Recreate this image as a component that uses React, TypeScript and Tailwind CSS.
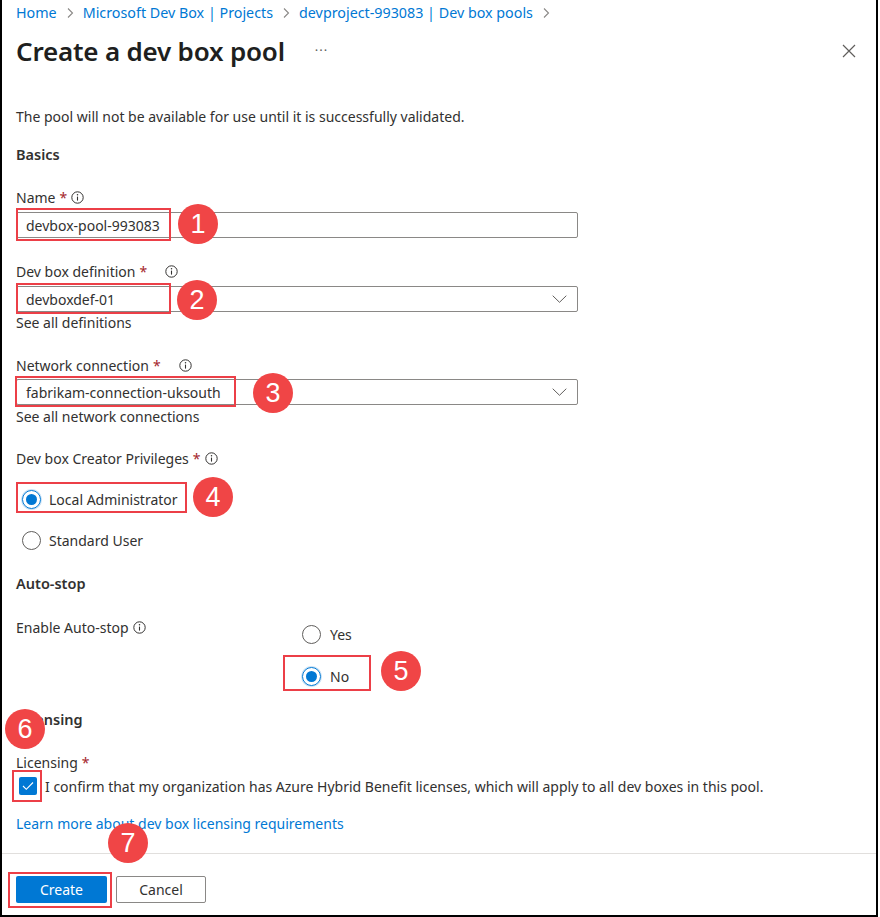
import type { ReactNode } from 'react'

function Info() {
  return (
    <svg width="13" height="13" viewBox="0 0 13 13" className="inline-block">
      <circle cx="6.5" cy="6.5" r="5.7" fill="none" stroke="#323130" strokeWidth="1" />
      <line x1="6.5" y1="5.6" x2="6.5" y2="9.6" stroke="#323130" strokeWidth="1.1" />
      <circle cx="6.5" cy="3.8" r="0.75" fill="#323130" />
    </svg>
  )
}

function Chevron() {
  return (
    <svg width="15" height="8" viewBox="0 0 15 8">
      <path d="M0.7 0.7 L7.5 7.3 L14.3 0.7" fill="none" stroke="#605e5c" strokeWidth="1" />
    </svg>
  )
}

function Crumb() {
  return (
    <svg width="8" height="12" viewBox="0 0 8 12" className="mx-[9px]">
      <path d="M2 1.5 L6.5 6 L2 10.5" fill="none" stroke="#8a8886" strokeWidth="1.1" />
    </svg>
  )
}

function Radio({ on }: { on?: boolean }) {
  return on ? (
    <span className="w-[19px] h-[19px] rounded-full border-[1.5px] border-[#0078d4] flex items-center justify-center shadow-[0_0_0_1px_#c7e0f4]">
      <span className="w-[11px] h-[11px] rounded-full bg-[#0078d4]" />
    </span>
  ) : (
    <span className="w-[19px] h-[19px] rounded-full border-[1.5px] border-[#605e5c]" />
  )
}

function Label({ children, info, gap = 'ml-1' }: { children: ReactNode; info?: boolean; gap?: string }) {
  return (
    <div className="h-[18px] flex items-center text-[14px] text-[#323130]">
      {children}
      {info && (
        <span className={`${gap} flex items-center`}>
          <Info />
        </span>
      )}
    </div>
  )
}

function Req() {
  return <span className="text-[#a4262c] ml-[4px]">*</span>
}

function Badge({ n, x, y }: { n: number; x: number; y: number }) {
  return (
    <div
      className="absolute w-[40px] h-[40px] rounded-full bg-[#f04546] text-white text-[27px] flex items-center justify-center font-['Liberation_Sans',sans-serif]"
      style={{ left: x - 20, top: y - 20 }}
    >
      {n}
    </div>
  )
}

function Box({ x, y, w, h }: { x: number; y: number; w: number; h: number }) {
  return (
    <div
      className="absolute border-2 border-[#ec3f47]"
      style={{ left: x, top: y, width: w, height: h }}
    />
  )
}

export default function App() {
  return (
    <div className="relative w-[880px] h-[917px] bg-white font-['Noto_Sans',sans-serif] text-[#323130] overflow-hidden">
      <div className="w-[878px] h-[917px] border-x-2 border-b-2 border-black flex flex-col">
        <div className="px-[14px]">
          <div className="h-[26px] flex items-center text-[14.3px] text-[#0078d4]">
            <span>Home</span>
            <Crumb />
            <span>Microsoft Dev Box | Projects</span>
            <Crumb />
            <span>devproject-993083 | Dev box pools</span>
            <Crumb />
          </div>
          <div className="h-[50px] flex items-center">
            <h1 className="text-[26px] font-semibold text-[#201f1e] tracking-[-0.2px]">Create a dev box pool</h1>
            <span className="ml-[30px] text-[13px] text-[#605e5c] tracking-[1px]">···</span>
            <svg width="14" height="14" viewBox="0 0 14 14" className="ml-auto mr-[6px]">
              <path d="M1 1 L13 13 M13 1 L1 13" stroke="#605e5c" strokeWidth="1.2" />
            </svg>
          </div>

          <p className="mt-[32px] h-[18px] text-[14px] leading-[18px]">
            The pool will not be available for use until it is successfully validated.
          </p>
          <div className="mt-[19px] h-[18px] text-[14.5px] font-semibold leading-[18px]">Basics</div>

          <div className="mt-[25px]">
            <Label info>
              Name
              <Req />
            </Label>
          </div>
          <div className="mt-[6px] w-[562px] h-[26px] border border-[#8a8886] rounded-[2px] flex items-center px-[9px] text-[14px]">
            devbox-pool-993083
          </div>

          <div className="mt-[24px]">
            <Label info gap="ml-[18px]">
              Dev box definition
              <Req />
            </Label>
          </div>
          <div className="mt-[6px] w-[562px] h-[26px] border border-[#8a8886] rounded-[2px] flex items-center pl-[9px] pr-[10px] text-[14px]">
            <span>devboxdef-01</span>
            <span className="ml-auto flex">
              <Chevron />
            </span>
          </div>
          <div className="mt-[2px] h-[18px] text-[14px] leading-[18px]">See all definitions</div>

          <div className="mt-[24px]">
            <Label info gap="ml-[18px]">
              Network connection
              <Req />
            </Label>
          </div>
          <div className="mt-[5px] w-[562px] h-[26px] border border-[#8a8886] rounded-[2px] flex items-center pl-[9px] pr-[10px] text-[14px]">
            <span>fabrikam-connection-uksouth</span>
            <span className="ml-auto flex">
              <Chevron />
            </span>
          </div>
          <div className="mt-[3px] h-[18px] text-[14px] leading-[18px]">See all network connections</div>

          <div className="mt-[23px]">
            <Label info>
              Dev box Creator Privileges
              <Req />
            </Label>
          </div>
          <div className="mt-[20px] h-[24px] flex items-center gap-[8px] pl-[6px] text-[14px]">
            <Radio on />
            <span>Local Administrator</span>
          </div>
          <div className="mt-[17px] h-[24px] flex items-center gap-[8px] pl-[6px] text-[14px]">
            <Radio />
            <span>Standard User</span>
          </div>

          <div className="mt-[22px] h-[18px] text-[14.5px] font-semibold leading-[18px]">Auto-stop</div>

          <div className="mt-[26px] flex">
            <div className="w-[286px]">
              <Label info>Enable Auto-stop</Label>
            </div>
            <div className="flex flex-col pt-[4px]">
              <div className="h-[24px] flex items-center gap-[9px] text-[14px]">
                <Radio />
                <span>Yes</span>
              </div>
              <div className="mt-[18px] h-[24px] flex items-center gap-[9px] text-[14px]">
                <Radio on />
                <span>No</span>
              </div>
            </div>
          </div>

          <div className="mt-[22px] h-[18px] text-[14.5px] font-semibold leading-[18px]">Licensing</div>
          <div className="mt-[25px]">
            <Label>
              Licensing
              <Req />
            </Label>
          </div>
          <div className="mt-[5px] h-[20px] flex items-center gap-[8px] text-[14px]">
            <span className="ml-[3px] w-[18px] h-[18px] rounded-[2px] bg-[#0078d4] flex items-center justify-center">
              <svg width="12" height="10" viewBox="0 0 12 10">
                <path d="M1 5 L4.3 8.3 L11 1.5" fill="none" stroke="white" strokeWidth="1.1" />
              </svg>
            </span>
            <span>I confirm that my organization has Azure Hybrid Benefit licenses, which will apply to all dev boxes in this pool.</span>
          </div>
          <div className="mt-[19px] h-[18px] text-[14px] leading-[18px] text-[#0078d4]">
            Learn more about dev box licensing requirements
          </div>
        </div>

        <div className="mt-[20px] h-px bg-[#e1dfdd]" />

        <div className="px-[14px] mt-[22px] flex gap-[9px]">
          <button className="w-[91px] h-[27px] rounded-[2px] bg-[#0078d4] text-white text-[14px]">Create</button>
          <button className="w-[90px] h-[27px] rounded-[2px] border border-[#8a8886] text-[14px]">Cancel</button>
        </div>
      </div>

      <Box x={16} y={208} w={155} h={33} />
      <Badge n={1} x={198} y={224} />
      <Box x={16} y={283} w={155} h={31} />
      <Badge n={2} x={197} y={300} />
      <Box x={15} y={376} w={221} h={31} />
      <Badge n={3} x={273} y={393} />
      <Box x={16} y={482} w={171} h={31} />
      <Badge n={4} x={213} y={497} />
      <Box x={283} y={655} w={88} h={36} />
      <Badge n={5} x={401} y={671} />
      <Badge n={6} x={25} y={729} />
      <Box x={12} y={770} w={30} h={32} />
      <Badge n={7} x={128} y={843} />
      <Box x={8} y={872} w={104} h={36} />
    </div>
  )
}
